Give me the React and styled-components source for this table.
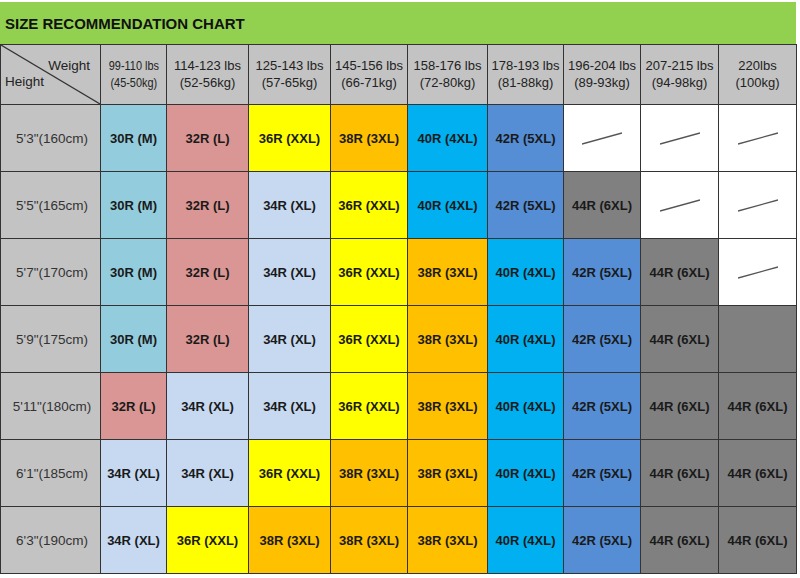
import styled, { createGlobalStyle } from "styled-components";

const GlobalStyle = createGlobalStyle`
  body {
    margin: 0;
    background: #fff;
    font-family: "Liberation Sans", Arial, sans-serif;
  }
`;

const COLORS = {
  M: "#93cddd",
  L: "#da9694",
  XL: "#c6d9f1",
  XXL: "#ffff00",
  "3XL": "#ffc000",
  "4XL": "#00b0f0",
  "5XL": "#558ed5",
  "6XL": "#808080",
};

const SIZES = {
  M: "30R (M)",
  L: "32R (L)",
  XL: "34R (XL)",
  XXL: "36R (XXL)",
  "3XL": "38R (3XL)",
  "4XL": "40R (4XL)",
  "5XL": "42R (5XL)",
  "6XL": "44R (6XL)",
};

const weights = [
  ["99-110 lbs", "(45-50kg)", true],
  ["114-123 lbs", "(52-56kg)"],
  ["125-143 lbs", "(57-65kg)"],
  ["145-156 lbs", "(66-71kg)"],
  ["158-176 lbs", "(72-80kg)"],
  ["178-193 lbs", "(81-88kg)"],
  ["196-204 lbs", "(89-93kg)"],
  ["207-215 lbs", "(94-98kg)"],
  ["220lbs", "(100kg)"],
];

// "-" = no size (slash), "x" = empty grey cell
const rows = [
  ["5'3\"(160cm)", ["M", "L", "XXL", "3XL", "4XL", "5XL", "-", "-", "-"]],
  ["5'5\"(165cm)", ["M", "L", "XL", "XXL", "4XL", "5XL", "6XL", "-", "-"]],
  ["5'7\"(170cm)", ["M", "L", "XL", "XXL", "3XL", "4XL", "5XL", "6XL", "-"]],
  ["5'9\"(175cm)", ["M", "L", "XL", "XXL", "3XL", "4XL", "5XL", "6XL", "x"]],
  ["5'11\"(180cm)", ["L", "XL", "XL", "XXL", "3XL", "4XL", "5XL", "6XL", "6XL"]],
  ["6'1\"(185cm)", ["XL", "XL", "XXL", "3XL", "3XL", "4XL", "5XL", "6XL", "6XL"]],
  ["6'3\"(190cm)", ["XL", "XXL", "3XL", "3XL", "3XL", "4XL", "5XL", "6XL", "6XL"]],
];

function App() {
  return (
    <Page>
      <GlobalStyle />
      <TitleBar>SIZE RECOMMENDATION CHART</TitleBar>
      <Chart>
        <Corner>
          <svg width="100%" height="100%" preserveAspectRatio="none" viewBox="0 0 100 100">
            <line x1="0" y1="0" x2="100" y2="100" stroke="#333" strokeWidth="1.2" vectorEffect="non-scaling-stroke" />
          </svg>
          <CornerWeight>Weight</CornerWeight>
          <CornerHeight>Height</CornerHeight>
        </Corner>
        {weights.map(([lbs, kg, squeeze]) => (
          <HeadCell key={lbs}>
            <HeadText $squeeze={squeeze}>{lbs}</HeadText>
            <HeadText $squeeze={squeeze}>{kg}</HeadText>
          </HeadCell>
        ))}
        {rows.map(([height, cells]) => [
          <HeightCell key={height}>{height}</HeightCell>,
          ...cells.map((s, i) => {
            if (s === "-")
              return (
                <SizeCell key={height + i} $bg="#fff">
                  <svg width="40" height="13" viewBox="0 0 40 13">
                    <line x1="0" y1="12" x2="40" y2="1" stroke="#555" strokeWidth="1.3" />
                  </svg>
                </SizeCell>
              );
            if (s === "x") return <SizeCell key={height + i} $bg="#808080" />;
            return (
              <SizeCell key={height + i} $bg={COLORS[s]}>
                {SIZES[s]}
              </SizeCell>
            );
          }),
        ])}
      </Chart>
    </Page>
  );
}

export default App;

const Page = styled.div`
  width: 797px;
  padding-top: 2px;
`;

const TitleBar = styled.div`
  height: 42px;
  width: 796px;
  background: #92d050;
  display: flex;
  align-items: center;
  padding-left: 5px;
  box-sizing: border-box;
  font-size: 15px;
  font-weight: bold;
  color: #111;
`;

const Chart = styled.div`
  display: grid;
  grid-template-columns: 99px 65px 81px 81px 76px 79px 75px 76px 77px 77px;
  grid-template-rows: 59px repeat(7, 66px);
  gap: 1px;
  padding: 1px;
  background: #333;
  width: max-content;
`;

const Cell = styled.div`
  display: flex;
  align-items: center;
  justify-content: center;
  font-size: 13px;
`;

const Corner = styled.div`
  position: relative;
  background: #c3c3c3;
  display: flex;
  flex-direction: column;
  justify-content: center;
  padding: 0 10px 2px 4px;
  font-size: 13.5px;
  line-height: 16px;
  color: #222;

  svg {
    position: absolute;
    inset: 0;
  }
`;

const CornerWeight = styled.span`
  align-self: flex-end;
`;

const CornerHeight = styled.span`
  align-self: flex-start;
`;

const HeadCell = styled(Cell)`
  flex-direction: column;
  background: #c3c3c3;
  color: #222;
  line-height: 16.5px;
`;

const HeadText = styled.span`
  display: inline-block;
  white-space: nowrap;
  transform: ${(p) => (p.$squeeze ? "scaleX(0.84)" : "none")};
`;

const HeightCell = styled(Cell)`
  background: #c3c3c3;
  color: #333;
  font-size: 13.5px;
  padding-left: 3px;
`;

const SizeCell = styled(Cell)`
  background: ${(p) => p.$bg};
  font-weight: bold;
  color: #1a1a1a;
  white-space: nowrap;
`;
